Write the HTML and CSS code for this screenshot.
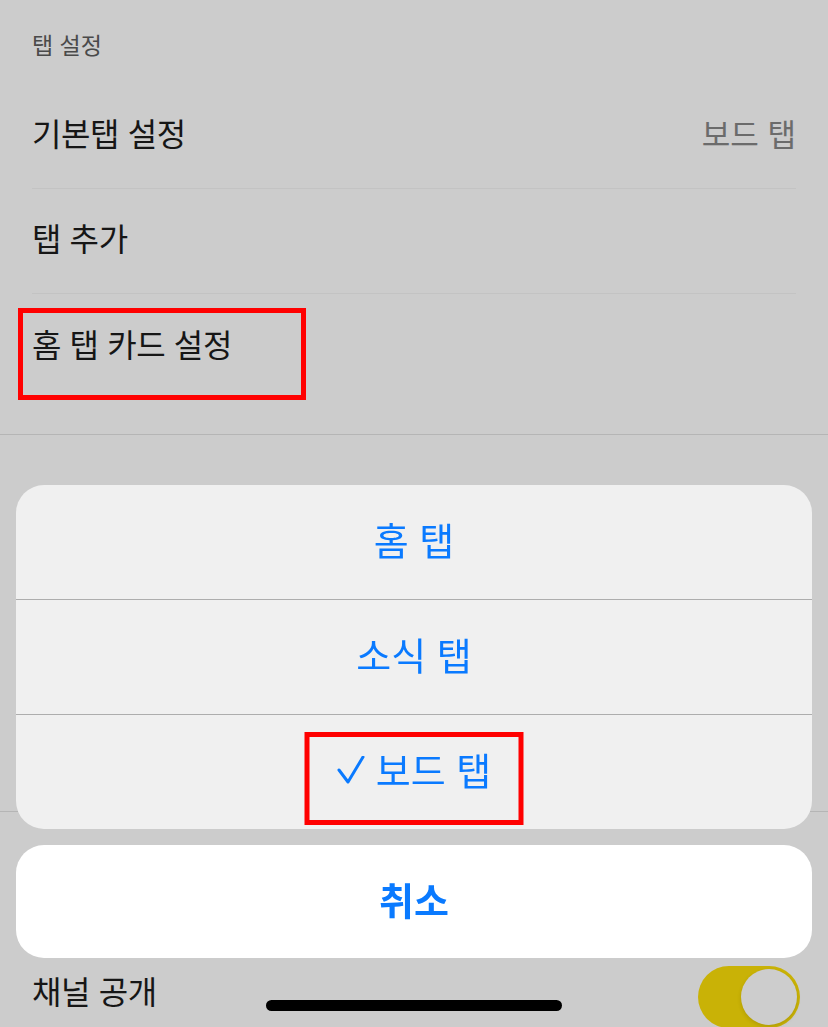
FILE: index.html
```html
<!DOCTYPE html>
<html lang="ko">
  <head>
    <meta charset="UTF-8" />
    <meta name="viewport" content="width=device-width, initial-scale=1.0" />
    <title>탭 설정</title>
    <link rel="stylesheet" href="styles.css">
  </head>
  <body>
    <div class="page">
      <div class="section-title">탭 설정</div>

      <div class="list">
        <div class="row">
          <span class="row-label">기본탭 설정</span>
          <span class="row-value">보드 탭</span>
        </div>
        <div class="row">
          <span class="row-label">탭 추가</span>
        </div>
        <div class="row row-last">
          <span class="row-label">홈 탭 카드 설정</span>
          <div class="mark mark-card"></div>
        </div>
      </div>

      <div class="list list-bottom">
        <div class="row row-last">
          <span class="row-label">채널 공개</span>
          <div class="toggle"><div class="toggle-knob"></div></div>
        </div>
      </div>
    </div>

    <!-- action sheet -->
    <div class="overlay">
      <div class="sheet">
        <div class="sheet-item">홈 탭</div>
        <div class="sheet-item">소식 탭</div>
        <div class="sheet-item">
          <svg class="check" width="28" height="28" viewBox="0 0 28 28">
            <polyline points="2,14 11,26 26,1" fill="none" stroke="#0a7aff" stroke-width="3" stroke-linecap="round" stroke-linejoin="round" />
          </svg>
          <span>보드 탭</span>
          <div class="mark mark-sheet"></div>
        </div>
      </div>
      <div class="cancel">취소</div>
    </div>

    <div class="home-indicator"></div>
  </body>
</html>
```

FILE: styles.css
```css
* {
  margin: 0;
  padding: 0;
  box-sizing: border-box;
}

body {
  font-family: "Noto Sans CJK KR", "Noto Sans", sans-serif;
  background: #cccccc;
  color: #161616;
  width: 828px;
  height: 1027px;
  overflow: hidden;
}

.page {
  height: 1027px;
  overflow: hidden;
}

.section-title {
  padding: 28px 32px 24px;
  font-size: 23px;
  line-height: 32px;
  color: #4a4a4a;
}

.list {
  padding: 0 32px 35px;
  border-bottom: 1px solid #b5b5b5;
}

.row {
  position: relative;
  height: 105px;
  display: flex;
  align-items: center;
  justify-content: space-between;
  border-bottom: 1px solid #c3c3c3;
  padding-bottom: 8px;
}

.row-last {
  border-bottom: none;
}

.row-label {
  font-size: 32px;
  letter-spacing: -0.4px;
}

.row-value {
  font-size: 31px;
  color: #6b6b6b;
}

.list-bottom {
  margin-top: 376px;
  border-top: 1px solid #b5b5b5;
  border-bottom: none;
  padding-top: 129px;
  padding-bottom: 0;
}

.toggle {
  width: 102px;
  height: 62px;
  border-radius: 31px;
  background: #c9b206;
  padding: 3px;
  display: flex;
  justify-content: flex-end;
  margin-right: -4px;
  margin-top: 14px;
}

.toggle-knob {
  width: 56px;
  height: 56px;
  border-radius: 50%;
  background: #cdcdcd;
  box-shadow: 0 2px 4px rgba(0,0,0,0.12);
}

.mark {
  position: absolute;
  border: 5px solid #ff0000;
}

.mark-card {
  top: 14px;
  left: -14px;
  width: 288px;
  height: 92px;
}

.overlay {
  position: fixed;
  inset: 0;
  display: flex;
  flex-direction: column;
  justify-content: flex-end;
  gap: 16px;
  padding: 0 16px 69px;
}

.sheet {
  background: #f0f0f0;
  border-radius: 28px;
  overflow: hidden;
}

.sheet-item {
  position: relative;
  height: 115px;
  display: flex;
  align-items: center;
  justify-content: center;
  gap: 11px;
  font-size: 38px;
  color: #0a7aff;
  border-top: 1px solid #adadad;
  padding-bottom: 8px;
}

.sheet-item:first-child {
  height: 114px;
  border-top: none;
}

.check {
  margin-top: 4px;
}

.mark-sheet {
  top: 17px;
  left: 50%;
  transform: translateX(-50%);
  width: 219px;
  height: 93px;
}

.cancel {
  height: 113px;
  background: #ffffff;
  border-radius: 28px;
  display: flex;
  align-items: center;
  justify-content: center;
  padding-bottom: 6px;
  font-size: 38px;
  font-weight: 700;
  color: #0a7aff;
}

.home-indicator {
  position: fixed;
  left: 266px;
  bottom: 16px;
  width: 296px;
  height: 11px;
  border-radius: 6px;
  background: #000000;
}
```
